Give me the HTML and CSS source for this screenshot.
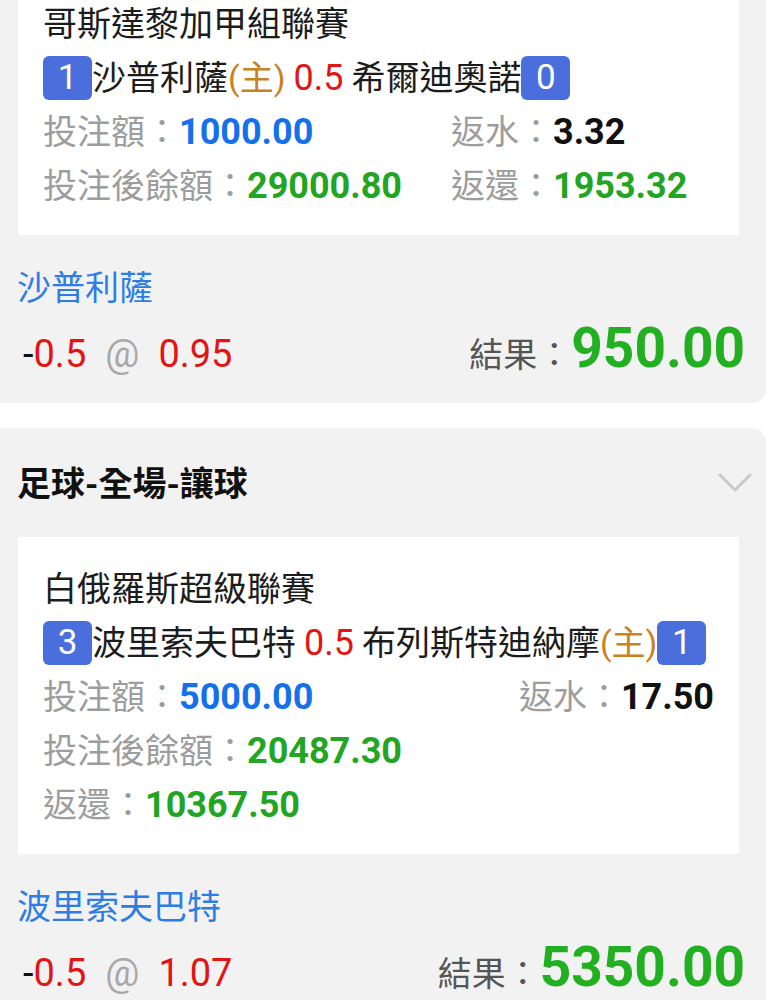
FILE: index.html
```html
<!DOCTYPE html>
<html lang="zh-Hant">
<head>
  <meta charset="UTF-8" />
  <title>注單</title>
  <link rel="stylesheet" href="styles.css">
</head>
<body>
  <div class="list">
    <section class="bet bet-first">
      <div class="detail">
        <div class="row league">哥斯達黎加甲組聯賽</div>
        <div class="row match">
          <span class="badge">1</span>沙普利薩<span class="home">(主)</span> <span class="num red">0.5</span> 希爾迪奧諾<span class="badge">0</span>
        </div>
        <div class="stats-grid">
          <div class="row"><span class="label">投注額：</span><b class="num blue">1000.00</b></div>
          <div class="row"><span class="label">返水：</span><b class="num black">3.32</b></div>
          <div class="row"><span class="label">投注後餘額：</span><b class="num green">29000.80</b></div>
          <div class="row"><span class="label">返還：</span><b class="num green">1953.32</b></div>
        </div>
      </div>
      <div class="pick">沙普利薩</div>
      <div class="result-row">
        <span class="odds"><span class="minus">-</span><span class="red">0.5</span><span class="at">@</span><span class="red">0.95</span></span>
        <span class="result"><span class="result-label">結果：</span><b class="result-value">950.00</b></span>
      </div>
    </section>

    <section class="bet">
      <div class="bet-head">
        <h2>足球-全場-讓球</h2>
        <svg class="chevron" width="34" height="20" viewBox="0 0 34 20">
          <polyline points="2,2 17,17 32,2" fill="none" stroke="#c9c9c9" stroke-width="3" stroke-linecap="round" stroke-linejoin="round"/>
        </svg>
      </div>
      <div class="detail">
        <div class="row league">白俄羅斯超級聯賽</div>
        <div class="row match">
          <span class="badge">3</span>波里索夫巴特 <span class="num red">0.5</span> 布列斯特迪納摩<span class="home">(主)</span><span class="badge">1</span>
        </div>
        <div class="row split">
          <span><span class="label">投注額：</span><b class="num blue">5000.00</b></span>
          <span><span class="label">返水：</span><b class="num black">17.50</b></span>
        </div>
        <div class="row"><span class="label">投注後餘額：</span><b class="num green">20487.30</b></div>
        <div class="row"><span class="label">返還：</span><b class="num green">10367.50</b></div>
      </div>
      <div class="pick">波里索夫巴特</div>
      <div class="result-row">
        <span class="odds"><span class="minus">-</span><span class="red">0.5</span><span class="at">@</span><span class="red">1.07</span></span>
        <span class="result"><span class="result-label">結果：</span><b class="result-value">5350.00</b></span>
      </div>
    </section>
  </div>
</body>
</html>
```

FILE: styles.css
```css
body {
  margin: 0;
  background: #fff;
  font-family: Roboto, "Noto Sans CJK TC", sans-serif;
  font-size: 34px;
  color: #1c1c1c;
}
.list {
  display: flex;
  flex-direction: column;
  gap: 25px;
  margin-top: -28px;
}
.bet {
  width: 766px;
  background: #f2f2f2;
  border-radius: 0 14px 14px 0;
  padding-bottom: 22px;
}
.bet-first {
  border-radius: 0 0 14px 0;
}
.bet-head {
  display: flex;
  justify-content: space-between;
  align-items: center;
  height: 54px;
  padding: 26px 14px 0 17px;
}
.bet-head h2 {
  margin: 0;
  font-size: 34px;
  font-weight: bold;
  color: #111;
}
.chevron {
  margin-top: 4px;
}
.bet-head + .detail {
  margin-top: 29px;
}
.detail {
  background: #fff;
  margin: 0 27px 0 18px;
  padding: 25px 25px 22px 25px;
}
.row {
  height: 54px;
  line-height: 54px;
  white-space: nowrap;
}
.match {
  display: flex;
  align-items: center;
}
.match .num {
  margin: 0 8px;
}
.badge {
  display: inline-block;
  width: 49px;
  height: 44px;
  line-height: 44px;
  text-align: center;
  background: #4a6fdd;
  color: #fff;
  border-radius: 6px;
  font-size: 35px;
}
.home {
  color: #c98220;
}
.stats-grid {
  display: grid;
  grid-template-columns: 408px auto;
}
.split {
  display: flex;
  justify-content: space-between;
}
.label {
  color: #9d9d9d;
}
.num {
  font-size: 36px;
}
b.num {
  font-weight: bold;
}
.red {
  color: #e31414;
}
.blue {
  color: #1570ec;
}
.black {
  color: #111;
}
.green {
  color: #22a522;
}
.pick {
  color: #2e7de4;
  height: 54px;
  line-height: 54px;
  padding: 26px 17px 0 17px;
}
.result-row {
  display: flex;
  justify-content: space-between;
  align-items: baseline;
  height: 66px;
  line-height: 66px;
  padding: 0 21px 0 23px;
}
.odds {
  font-size: 38px;
}
.minus {
  color: #111;
}
.at {
  color: #a8a8a8;
  margin: 0 19px;
}
.result-label {
  color: #555;
}
.result-value {
  font-size: 55px;
  font-weight: bold;
  color: #22b022;
}
```
